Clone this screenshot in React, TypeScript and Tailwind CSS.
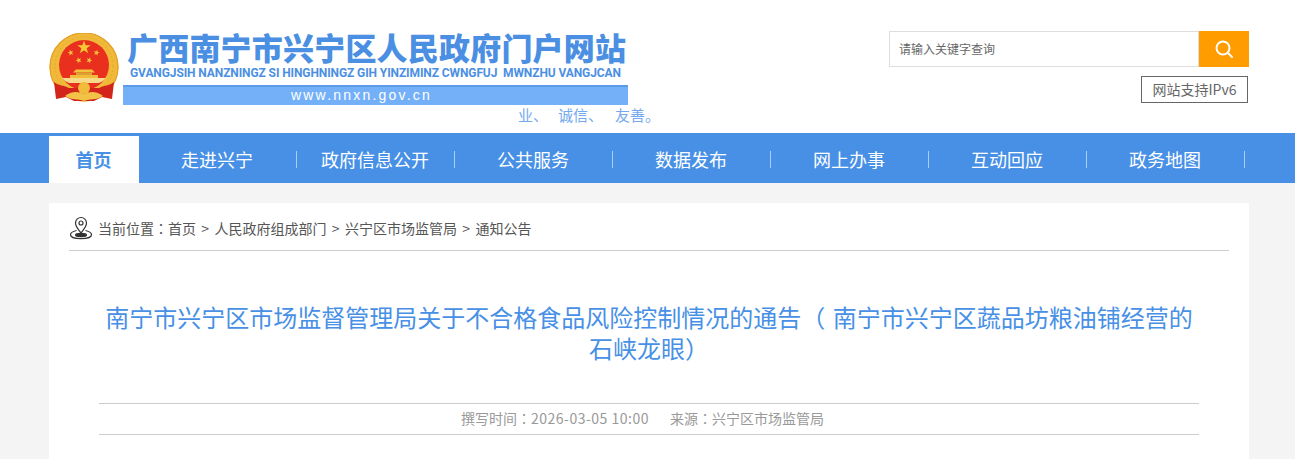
const cjk = "font-['Noto_Sans_CJK_SC','Liberation_Sans',sans-serif]";
const colon = "font-['Noto_Sans_CJK_TC',sans-serif]";

const navItems = ['走进兴宁', '政府信息公开', '公共服务', '数据发布', '网上办事', '互动回应', '政务地图'];
const crumbs = ['人民政府组成部门', '兴宁区市场监管局', '通知公告'];

function star(cx: number, cy: number, r: number, rot = 0) {
  const pts: string[] = [];
  for (let i = 0; i < 10; i++) {
    const radius = i % 2 === 0 ? r : r * 0.4;
    const a = ((-90 + rot + i * 36) * Math.PI) / 180;
    pts.push(`${(cx + radius * Math.cos(a)).toFixed(2)},${(cy + radius * Math.sin(a)).toFixed(2)}`);
  }
  return pts.join(' ');
}

function Emblem() {
  return (
    <svg width="70" height="70" viewBox="0 0 70 70" className="shrink-0">
      <circle cx="35" cy="34" r="34.5" fill="#f0b93a" />
      <circle cx="35" cy="34" r="34" fill="none" stroke="#e3a128" strokeWidth="1.2" />
      <circle cx="35" cy="33" r="29" fill="none" stroke="#e8a92c" strokeWidth="1" strokeDasharray="2 2" />
      <circle cx="35" cy="32" r="25" fill="#e9301f" />
      <polygon points={star(35, 14.5, 7)} fill="#f6c935" />
      <polygon points={star(21.7, 19.7, 3.2, -15)} fill="#f2c03a" />
      <polygon points={star(47.5, 19.7, 3.2, 15)} fill="#f2c03a" />
      <polygon points={star(29.7, 27.3, 3.2, -20)} fill="#f2c03a" />
      <polygon points={star(40.2, 27.3, 3.2, 20)} fill="#f2c03a" />
      <path d="M27 36.5 H43 L46 39.5 H24 Z" fill="#f3c23f" />
      <path d="M27 39.5 H43 V42 H27 Z" fill="#d9a233" />
      <path d="M21 42 H49 V45 H21 Z" fill="#f0bc3a" />
      <path d="M13 45 H57 C55 47 53 49 50 50 H20 C17 49 15 47 13 45 Z" fill="#f7d98a" />
      <path d="M5 49 C10 53 14 52 20 55 L50 55 C56 52 60 53 65 49 L63 66 L53 64 L45 68 H25 L17 64 L7 66 Z" fill="#d3241c" />
      <circle cx="35" cy="55" r="6" fill="#f0bc3a" />
      <path d="M16 63 C22 58 29 58 35 61 C41 58 48 58 54 63 C47 68 41 65 35 68 C29 65 23 68 16 63 Z" fill="#f2c246" />
    </svg>
  );
}

function Logo() {
  return (
    <div className="flex items-start">
      <div className="pt-[33px]">
        <Emblem />
      </div>
      <div className="ml-[4px] w-[505px] pt-[28px]">
        <div className={`${cjk} pl-[4px] text-[31px] leading-[38px] font-black tracking-[0.2px] whitespace-nowrap text-[#4b8fe3]`}>
          广西南宁市兴宁区人民政府门户网站
        </div>
        <div className="pl-[7px] font-['Roboto',sans-serif] text-[12px] leading-[14px] font-bold tracking-[-0.1px] whitespace-pre text-[#4b8fe3]">
          GVANGJSIH NANZNINGZ SI HINGHNINGZ GIH YINZIMINZ CWNGFUJ  MWNZHU VANGJCAN
        </div>
        <div className="mt-[5px] h-[20px] border-t-2 border-[#5a9bea] bg-[#74b0f8] pl-[168px] font-['Liberation_Sans',sans-serif] text-[14px] leading-[17px] tracking-[2.2px] text-white">
          www.nnxn.gov.cn
        </div>
        <div className={`${cjk} flex gap-[10px] pl-[395px] text-[15px] leading-[20px] whitespace-nowrap text-[#74a9f0]`}>
          <span>业、</span>
          <span>诚信、</span>
          <span className="ml-[2px]">友善。</span>
        </div>
      </div>
    </div>
  );
}

function SearchBox() {
  return (
    <div className="flex w-[360px] flex-col items-end pt-[31px]">
      <div className="flex h-[36px] w-full">
        <div className={`${cjk} flex-1 border border-[#dddddd] pl-[9px] text-[12px] leading-[34px] text-[#666666]`}>请输入关键字查询</div>
        <div className="flex w-[50px] items-center justify-center bg-[#ff9c00]">
          <svg width="20" height="20" viewBox="0 0 20 20" fill="none" stroke="#ffffff" strokeWidth="2" strokeLinecap="round">
            <circle cx="9" cy="9" r="6.5" />
            <path d="M14 14 L18 18" />
          </svg>
        </div>
      </div>
      <div className={`${cjk} mt-[9px] mr-[1px] h-[27px] w-[107px] border border-[#666666] text-center text-[14px] leading-[25px] text-[#666666]`}>
        网站支持IPv6
      </div>
    </div>
  );
}

function Nav() {
  return (
    <nav className="h-[50px] bg-[#4790e6] pt-[3px]">
      <ul className={`${cjk} ml-[49px] flex h-[47px] w-[1200px] text-[18px] text-white`}>
        <li className="flex w-[90px] items-center justify-center bg-white pr-[1px] pb-[1px] font-bold text-[#4790e6]">首页</li>
        {navItems.map((item) => (
          <li key={item} className="relative flex w-[158px] items-center justify-center pr-[2px] pb-[1px]">
            {item}
            <span className="absolute top-[15px] right-0 h-[17px] w-px bg-[#a9cdf5]" />
          </li>
        ))}
      </ul>
    </nav>
  );
}

function PinIcon() {
  return (
    <svg width="24" height="24" viewBox="0 0 24 24" fill="none" stroke="#333333" strokeWidth="1.2" className="shrink-0">
      <path d="M12 17 C9 13 6.5 10.5 6.5 7 A5.5 5.5 0 0 1 17.5 7 C17.5 10.5 15 13 12 17 Z" />
      <circle cx="12" cy="7" r="2" />
      <path d="M7.5 14.5 C3.5 15.5 1.5 17 1.5 18.7 C1.5 21 6 22.6 12 22.6 C18 22.6 22.5 21 22.5 18.7 C22.5 17 20.5 15.5 16.5 14.5" />
      <ellipse cx="12" cy="19" rx="5.5" ry="1.6" fill="#333333" />
    </svg>
  );
}

export default function App() {
  return (
    <div className="h-[459px] overflow-hidden bg-[#f4f4f4]">
      <header className="h-[133px] bg-white">
        <div className="ml-[49px] flex h-full w-[1200px] justify-between">
          <Logo />
          <SearchBox />
        </div>
      </header>
      <Nav />
      <main className="mt-[20px] ml-[49px] h-[400px] w-[1200px] bg-white px-[20px]">
        <div className={`${cjk} flex h-[48px] items-center border-b border-[#cccccc] pt-[3px] text-[14px] text-[#555555]`}>
          <PinIcon />
          <span className="ml-[5px]">
            当前位置<span className={colon}>：</span>首页
          </span>
          {crumbs.map((c) => (
            <span key={c} className="flex">
              <span className="w-[18.5px] text-center">&gt;</span>
              {c}
            </span>
          ))}
        </div>
        <div className="px-[30px]">
          <h1 className={`${cjk} mt-[50px] text-center text-[24px] leading-[31px] [word-spacing:2px] text-[#4790e6]`}>
            南宁市兴宁区市场监督管理局关于不合格食品风险控制情况的通告（ 南宁市兴宁区蔬品坊粮油铺经营的石峡龙眼）
          </h1>
          <div className={`${cjk} mt-[40px] flex h-[32px] justify-center gap-[21px] border-y border-[#cccccc] pr-[13px] text-[14px] leading-[28px] text-[#999999]`}>
            <span>
              撰写时间<span className={colon}>：</span>
              <span className="tracking-[0.5px]">2026-03-05 10:00</span>
            </span>
            <span>
              来源<span className={colon}>：</span>兴宁区市场监管局
            </span>
          </div>
        </div>
      </main>
    </div>
  );
}
